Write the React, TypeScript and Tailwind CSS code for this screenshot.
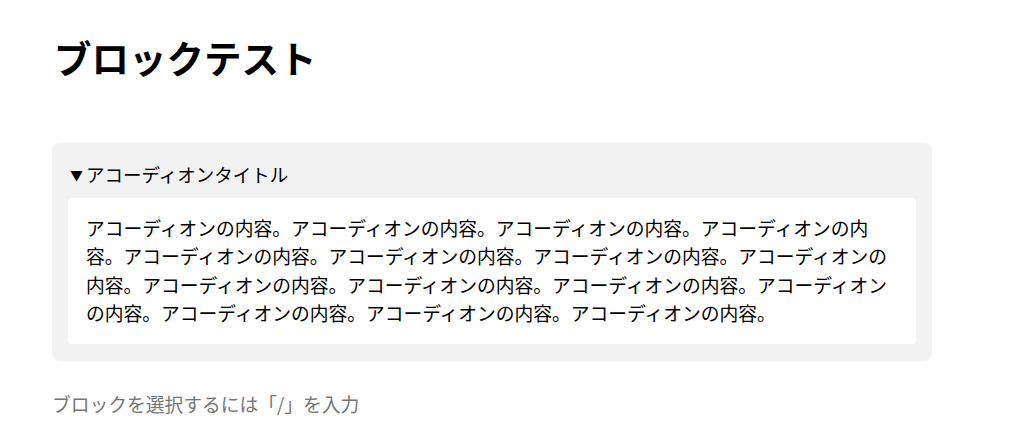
import { useState } from "react";

const CONTENT = "アコーディオンの内容。".repeat(15);

export default function App() {
  const [open, setOpen] = useState(true);

  return (
    <div
      className="min-h-screen bg-white pl-[52px] pt-[32px] text-black"
      style={{ fontFamily: '"Noto Sans CJK JP", "Noto Sans", sans-serif' }}
    >
      <div className="w-[880px]">
        <h1 className="ml-[2px] text-[37.5px] font-bold leading-[49px]">ブロックテスト</h1>

        <div className="mt-[62px] rounded-lg bg-[#f2f2f2] px-4 pt-[17px] pb-[17px]">
          <button
            type="button"
            onClick={() => setOpen(!open)}
            className="mb-[9px] flex items-center text-left text-[18.5px] leading-[28.5px]"
          >
            <span className="ml-[2px] mr-[3px] text-[13px] leading-none">{open ? "▼" : "▶"}</span>
            アコーディオンタイトル
          </button>
          {open && (
            <div className="rounded bg-white px-[18px] py-4 text-[18.75px] leading-[28.5px]">
              {CONTENT}
            </div>
          )}
        </div>

        <p className="mt-[29px] text-[18.75px] leading-[28px] text-[#757575]">
          ブロックを選択するには「/」を入力
        </p>
      </div>
    </div>
  );
}
